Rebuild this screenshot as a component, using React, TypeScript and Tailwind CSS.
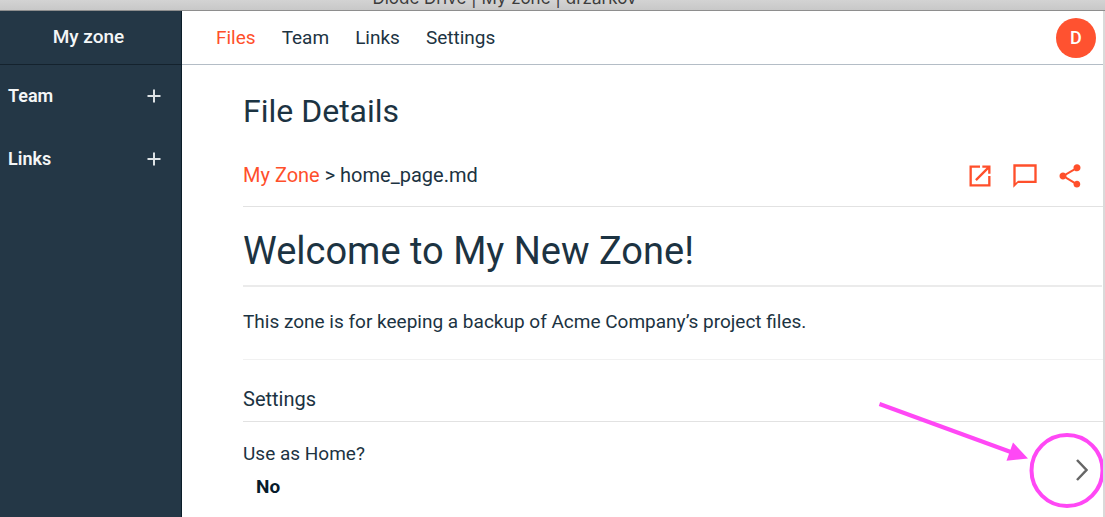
import type { ReactNode } from "react";

const iconButtons: { label: string; path: string }[] = [
  {
    label: "Open in new window",
    path: "M19 19H5V5h7V3H3v18h18v-9h-2v7zM14 3v2h3.6l-9.8 9.8 1.4 1.4L19 6.4V10h2V3h-7z",
  },
  {
    label: "Comments",
    path: "M2 2v20l4-4h16V2H2zm18 14H6l-2 2V4h16v12z",
  },
  {
    label: "Share",
    path: "M18 16.1c-.8 0-1.4.3-2 .8l-7.100-4.200c.1-.2.1-.5.1-.7s0-.5-.1-.7l7-4.100c.5.5 1.300.8 2.100.8 1.700 0 3-1.300 3-3s-1.300-3-3-3-3 1.300-3 3c0 .2 0 .5.100.7l-7 4.100C7.500 9.300 6.800 9 6 9c-1.700 0-3 1.300-3 3s1.300 3 3 3c.8 0 1.500-.3 2-.8l7.100 4.200c-.1.2-.1.4-.1.600 0 1.600 1.300 2.900 2.900 2.900s2.900-1.300 2.900-2.900-1.200-2.900-2.800-2.900z",
  },
];

function SidebarSection({ label }: { label: string }) {
  return (
    <div className="flex h-[63px] items-center justify-between pr-[19px] pl-2">
      <a href="#" className="text-lg font-semibold">
        {label}
      </a>
      <button type="button" aria-label={`Add to ${label}`} className="p-px">
        <svg viewBox="0 0 14 14" className="size-[14px]" fill="none" stroke="#dde2e5" strokeWidth="2">
          <path d="M7 0.500v13M0.500 7h13" />
        </svg>
      </button>
    </div>
  );
}

function NavLink({ active = false, children }: { active?: boolean; children: ReactNode }) {
  return (
    <a href="#" className={active ? "text-[#ff4f2b]" : "text-[#1c3342]"}>
      {children}
    </a>
  );
}

export default function App() {
  return (
    <div className="relative flex h-screen flex-col overflow-hidden bg-white font-['Roboto',sans-serif] text-[#1c3342]">
      <div className="flex h-[11px] shrink-0 items-end justify-center overflow-hidden border-b border-[#8e8e8e] bg-linear-to-b from-[#d3d3d3] to-[#c8c8c8] pr-24 pb-[2px] font-['Inter',sans-serif] text-[17px] leading-[20px] text-[#3c3c3c]">
        Diode Drive | My zone | drzarkov
      </div>

      <div className="flex min-h-0 flex-1 border-r-2 border-[#dadada]">
        <aside className="w-[182px] shrink-0 border-r border-[#0b1d29] bg-[#243746] text-[#f4f6f7]">
          <div className="flex h-[54px] items-center justify-center border-b border-[#14222d] pr-1 text-[19px] font-medium">
            My zone
          </div>
          <div className="-mt-px">
            <SidebarSection label="Team" />
            <SidebarSection label="Links" />
          </div>
        </aside>

        <div className="flex min-w-0 flex-1 flex-col">
          <header className="flex h-[54px] shrink-0 items-center justify-between border-b border-[#b4bdc6] pr-[7px] pl-[34px]">
            <nav className="flex gap-[26px] pt-[2px] text-[19px]">
              <NavLink active>Files</NavLink>
              <NavLink>Team</NavLink>
              <NavLink>Links</NavLink>
              <NavLink>Settings</NavLink>
            </nav>
            <button
              type="button"
              aria-label="Account"
              className="flex size-10 items-center justify-center rounded-full bg-[#ff5230] text-lg font-medium text-white"
            >
              D
            </button>
          </header>

          <main className="flex-1 pl-[61px]">
            <h1 className="pt-[26px] text-[32px] leading-[40px]">File Details</h1>

            <div className="mt-[13px] flex h-[63px] items-center justify-between border-b border-[#e2e2e2] pr-[19px]">
              <div className="text-[20px]">
                <a href="#" className="text-[#ff4f2b]">
                  My Zone
                </a>{" "}
                &gt; home_page.md
              </div>
              <div className="flex gap-[17px] pt-[2px]">
                {iconButtons.map(({ label, path }) => (
                  <button key={label} type="button" aria-label={label}>
                    <svg viewBox="0 0 24 24" className="size-7" fill="#ff4f2b">
                      <path d={path} />
                    </svg>
                  </button>
                ))}
              </div>
            </div>

            <article className="border-b border-[#f1f1f1]">
              <h2 className="mr-px border-b-2 border-[#ebebeb] pt-[21px] pb-[11px] text-[38px] leading-[46px]">
                Welcome to My New Zone!
              </h2>
              <p className="pt-[21px] pb-[23px] text-[19px] leading-[28px]">
                This zone is for keeping a backup of Acme Company’s project files.
              </p>
            </article>

            <h3 className="border-b border-[#e2e2e2] pt-[25px] pb-[8px] text-[20px] leading-[28px]">Settings</h3>

            <div className="flex items-center justify-between pt-[15px] pr-[15px]">
              <dl className="text-[19px] leading-[33px]">
                <dt>Use as Home?</dt>
                <dd className="pl-[13px] font-bold text-[#061b2b]">No</dd>
              </dl>
              <button type="button" aria-label="Next">
                <svg viewBox="0 0 12 22" className="h-[22px] w-3" fill="none" stroke="#666666" strokeWidth="2.500">
                  <path d="M1 1l9.500 10L1 21" />
                </svg>
              </button>
            </div>
          </main>
        </div>
      </div>

      <svg
        viewBox="0 0 226 114"
        aria-hidden="true"
        className="pointer-events-none absolute right-[2px] bottom-[6px] h-[114px] w-[226px]"
        fill="none"
        stroke="#ff48f5"
      >
        <path d="M2.500 7l134 49" strokeWidth="4" />
        <path d="M136 45.500L151 61.500L129.500 63.800z" fill="#ff48f5" stroke="none" />
        <circle cx="190" cy="73.500" r="35.500" strokeWidth="4" />
      </svg>
    </div>
  );
}
